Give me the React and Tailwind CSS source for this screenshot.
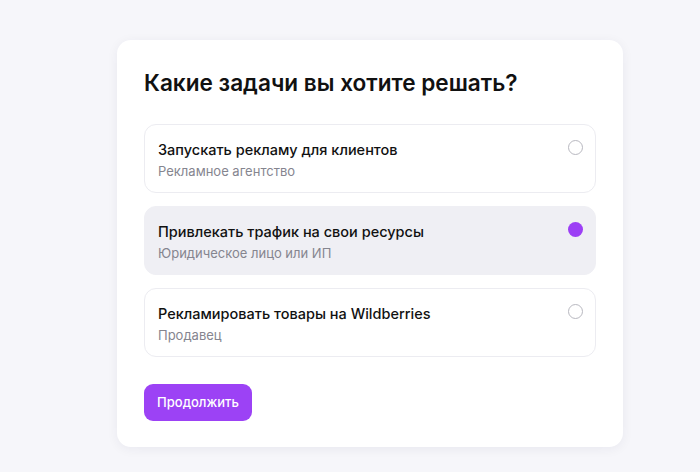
import React, { useState } from "react";

const options = [
  { title: "Запускать рекламу для клиентов", sub: "Рекламное агентство" },
  { title: "Привлекать трафик на свои ресурсы", sub: "Юридическое лицо или ИП" },
  { title: "Рекламировать товары на Wildberries", sub: "Продавец" },
];

export default function App() {
  const [sel, setSel] = useState(1);
  return (
    <div className="w-[700px] h-[472px] bg-[#f6f6fa] pt-[40px] pl-[117px] overflow-hidden" style={{ fontFamily: "Inter, 'Noto Sans', sans-serif" }}>
      <div className="w-[506px] h-[407px] bg-white rounded-[14px] shadow-[0_2px_12px_rgba(20,20,60,0.06)] px-[27px] pt-[28px]">
        <h1 className="text-[22.6px] leading-[30px] font-semibold text-[#111]">Какие задачи вы хотите решать?</h1>
        <div className="mt-[26px] flex flex-col gap-[13px]">
          {options.map((o, i) => {
            const active = i === sel;
            return (
              <button
                key={i}
                onClick={() => setSel(i)}
                className={
                  "h-[69px] rounded-[12px] flex items-start justify-between pl-[13px] pr-[12px] pt-[15px] text-left " +
                  (active ? "bg-[#efeff4] border border-[#efeff4]" : "bg-white border border-[#ececf1]")
                }
              >
                <div className="flex flex-col">
                  <span className="text-[14.5px] leading-[20px] font-medium text-[#111]">{o.title}</span>
                  <span className="text-[13px] leading-[20px] text-[#85858f] mt-[1px]">{o.sub}</span>
                </div>
                {active ? (
                  <span className="w-[15px] h-[15px] rounded-full bg-[#9c3ff5]" />
                ) : (
                  <span className="w-[15px] h-[15px] rounded-full border-[1.5px] border-[#b8b8c0]" />
                )}
              </button>
            );
          })}
        </div>
        <button className="mt-[27px] h-[37px] w-[108px] rounded-[9px] bg-[#9c42f5] text-white text-[13px] font-medium">Продолжить</button>
      </div>
    </div>
  );
}
